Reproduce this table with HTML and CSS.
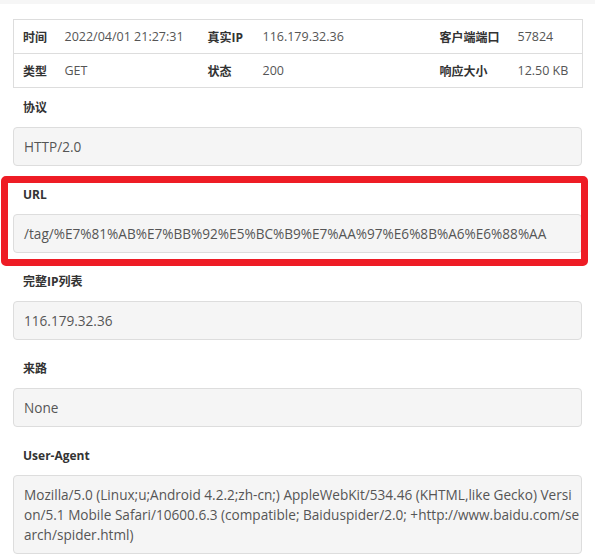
FILE: index.html
```html
<!DOCTYPE html>
<html lang="zh-CN">
<head>
    <meta charset="UTF-8">
    <meta name="viewport" content="width=device-width, initial-scale=1.0">
    <title>访问日志详情</title>
    <link rel="stylesheet" href="styles.css">
</head>
<body>
    <div class="top-strip"></div>

    <div class="detail">
        <table class="info-table">
            <colgroup>
                <col class="c-label1">
                <col class="c-value1">
                <col class="c-label2">
                <col class="c-value2">
                <col class="c-label3">
                <col class="c-value3">
            </colgroup>
            <tr>
                <th>时间</th>
                <td>2022/04/01 21:27:31</td>
                <th>真实IP</th>
                <td>116.179.32.36</td>
                <th>客户端端口</th>
                <td>57824</td>
            </tr>
            <tr>
                <th>类型</th>
                <td>GET</td>
                <th>状态</th>
                <td>200</td>
                <th>响应大小</th>
                <td>12.50 KB</td>
            </tr>
        </table>

        <div class="field">
            <label>协议</label>
            <div class="field-box">HTTP/2.0</div>
        </div>

        <div class="field highlight">
            <label>URL</label>
            <div class="field-box">/tag/%E7%81%AB%E7%BB%92%E5%BC%B9%E7%AA%97%E6%8B%A6%E6%88%AA</div>
        </div>

        <div class="field">
            <label>完整IP列表</label>
            <div class="field-box">116.179.32.36</div>
        </div>

        <div class="field">
            <label>来路</label>
            <div class="field-box">None</div>
        </div>

        <div class="field">
            <label>User-Agent</label>
            <div class="field-box multi">Mozilla/5.0 (Linux;u;Android 4.2.2;zh-cn;) AppleWebKit/534.46 (KHTML,like Gecko) Version/5.1 Mobile Safari/10600.6.3 (compatible; Baiduspider/2.0; +http://www.baidu.com/search/spider.html)</div>
        </div>
    </div>
</body>
</html>
```

FILE: styles.css
```css
body {
    margin: 0;
    font-family: "Open Sans", "Noto Sans CJK SC", sans-serif;
    color: #555;
    background: #fff;
}
.top-strip {
    height: 4px;
    background-color: #f6f6f6;
}
.detail {
    padding: 15px 13px 0 13px;
}
.info-table {
    width: 100%;
    border-collapse: collapse;
    table-layout: fixed;
}
.info-table th,
.info-table td {
    height: 33px;
    padding: 0 0 0 9px;
    border-top: 1px solid #ddd;
    border-bottom: 1px solid #ddd;
    text-align: left;
    white-space: nowrap;
}
.info-table tr > :first-child {
    border-left: 1px solid #ddd;
}
.info-table tr > :last-child {
    border-right: 1px solid #ddd;
}
.info-table th {
    font-size: 12px;
    color: #333;
    font-weight: bold;
}
.info-table td {
    font-size: 12.5px;
    color: #555;
}
.c-label1 { width: 42px; }
.c-value1 { width: 143px; }
.c-label2 { width: 55px; }
.c-value2 { width: 177px; }
.c-label3 { width: 78px; }
.c-value3 { width: 74px; }

.field {
    margin-top: 10px;
    margin-bottom: 19px;
}
.field label {
    display: block;
    padding-left: 10px;
    line-height: 20px;
    font-size: 12px;
    font-weight: bold;
    color: #333;
    margin-bottom: 9px;
}
.field-box {
    padding: 8px 1.5px 8px 10px;
    line-height: 21px;
    font-size: 13.6px;
    color: #555;
    background-color: #f5f5f5;
    border: 1px solid #ddd;
    border-radius: 4px;
}
.field-box.multi {
    line-height: 20px;
    padding-top: 9px;
    word-break: break-all;
}
.highlight {
    position: relative;
}
.highlight::after {
    content: "";
    position: absolute;
    top: -9px;
    left: -12px;
    right: -6px;
    bottom: -13px;
    border: 7px solid #ee1c25;
    border-radius: 5px;
    pointer-events: none;
}
```
